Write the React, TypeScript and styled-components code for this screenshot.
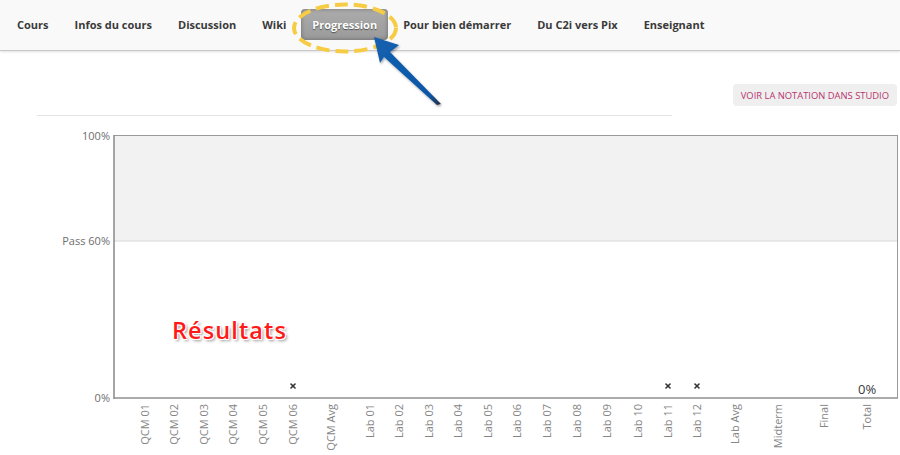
import React from "react";
import styled, { createGlobalStyle } from "styled-components";

const GlobalStyle = createGlobalStyle`
  html, body { margin: 0; padding: 0; background: #ffffff; overflow: hidden; }
  body { font-family: "Open Sans", "Liberation Sans", sans-serif; }
  * { box-sizing: border-box; }
`;

const Page = styled.div`
  position: relative;
  width: 900px;
  height: 455px;
  overflow: hidden;
  background: #fff;
`;

const NavBar = styled.nav`
  height: 51px;
  display: flex;
  align-items: center;
  gap: 4px;
  padding-left: 6px;
  background: #f9f9f9;
  border-bottom: 1px solid #c8c8c8;
  box-shadow: 0 1px 2px rgba(0, 0, 0, 0.12);
`;

const NavLink = styled.a<{ $active?: boolean }>`
  height: 31px;
  display: flex;
  align-items: center;
  padding: 0 11px;
  margin-top: -2px;
  font-size: 11px;
  font-weight: 700;
  color: ${(p) => (p.$active ? "#ffffff" : "#3a3a3a")};
  text-decoration: none;
  border-radius: 4px;
  background: ${(p) => (p.$active ? "linear-gradient(#acacac, #9a9a9a)" : "transparent")};
  box-shadow: ${(p) => (p.$active ? "inset 0 0 4px rgba(0,0,0,0.35)" : "none")};
  text-shadow: ${(p) => (p.$active ? "0 1px 1px rgba(0,0,0,0.5)" : "none")};
`;

const Toolbar = styled.div`
  display: flex;
  justify-content: flex-end;
  padding: 33px 3px 0 0;
`;

const StudioButton = styled.button`
  height: 22px;
  padding: 0 8px;
  border: none;
  border-radius: 4px;
  background: #efefef;
  color: #b8336e;
  font-family: "Open Sans", "Liberation Sans", sans-serif;
  font-size: 9.4px;
  font-weight: 400;
  text-transform: uppercase;
`;

const Divider = styled.div`
  margin: 9px 0 0 37px;
  width: 635px;
  height: 1px;
  background: #e4e4e4;
`;

const ChartSvg = styled.svg`
  display: block;
  width: 900px;
  height: 339px;
  font-family: "Open Sans", "Liberation Sans", sans-serif;
`;

const Overlay = styled.svg`
  position: absolute;
  top: 0;
  left: 0;
  width: 900px;
  height: 455px;
  pointer-events: none;
`;

const Callout = styled.span`
  position: absolute;
  left: 172px;
  top: 314px;
  font-family: "Open Sans", "Liberation Sans", sans-serif;
  font-size: 23.5px;
  font-weight: 600;
  letter-spacing: 1.1px;
  color: #ff1a1a;
  text-shadow: -1px -1px 0 #fff, 1px -1px 0 #fff, -1px 1px 0 #fff, 1px 1px 0 #fff,
    2px 2px 3px rgba(0, 0, 0, 0.45);
`;

const navItems = [
  "Cours",
  "Infos du cours",
  "Discussion",
  "Wiki",
  "Progression",
  "Pour bien démarrer",
  "Du C2i vers Pix",
  "Enseignant",
];

const columns: { label: string; x: number }[] = [
  { label: "QCM 01", x: 145 },
  { label: "QCM 02", x: 174 },
  { label: "QCM 03", x: 204 },
  { label: "QCM 04", x: 233 },
  { label: "QCM 05", x: 263 },
  { label: "QCM 06", x: 293 },
  { label: "QCM Avg", x: 331 },
  { label: "Lab 01", x: 370 },
  { label: "Lab 02", x: 399 },
  { label: "Lab 03", x: 429 },
  { label: "Lab 04", x: 458 },
  { label: "Lab 05", x: 488 },
  { label: "Lab 06", x: 517 },
  { label: "Lab 07", x: 547 },
  { label: "Lab 08", x: 577 },
  { label: "Lab 09", x: 607 },
  { label: "Lab 10", x: 638 },
  { label: "Lab 11", x: 668 },
  { label: "Lab 12", x: 697 },
  { label: "Lab Avg", x: 735 },
  { label: "Midterm", x: 778 },
  { label: "Final", x: 824 },
  { label: "Total", x: 867 },
];

const markers = [293, 668, 697];

const PLOT = { left: 114, right: 897, top: 135, bottom: 398, pass: 241 };

function Chart() {
  return (
    <ChartSvg viewBox="0 116 900 339">
      <rect x={PLOT.left} y={PLOT.top} width={PLOT.right - PLOT.left} height={PLOT.pass - PLOT.top} fill="#f2f2f2" />
      <line x1={PLOT.left} x2={PLOT.right} y1={PLOT.pass} y2={PLOT.pass} stroke="#e3e3e3" strokeWidth={1.5} />
      <line x1={PLOT.left} x2={PLOT.right} y1={PLOT.top + 0.5} y2={PLOT.top + 0.5} stroke="#9a9a9a" strokeWidth={1} />
      <line x1={PLOT.right + 0.5} x2={PLOT.right + 0.5} y1={PLOT.top} y2={PLOT.bottom} stroke="#9a9a9a" strokeWidth={1} />
      <line x1={PLOT.left} x2={PLOT.left} y1={PLOT.top} y2={PLOT.bottom + 1} stroke="#8f8f8f" strokeWidth={1.6} />
      <line x1={PLOT.left} x2={PLOT.right + 1} y1={PLOT.bottom} y2={PLOT.bottom} stroke="#8f8f8f" strokeWidth={1.6} />

      <g fill="#6e6e6e" fontSize={11} textAnchor="end">
        <text x={110} y={140}>100%</text>
        <text x={110} y={245}>Pass 60%</text>
        <text x={110} y={402}>0%</text>
      </g>

      <g fill="#858585" fontSize={11} textAnchor="end">
        {columns.map((c) => (
          <text key={c.label} transform={`translate(${c.x + 4} 404) rotate(-90)`}>
            {c.label}
          </text>
        ))}
      </g>

      <g stroke="#333" strokeWidth={1.6} strokeLinecap="round">
        {markers.map((mx) => (
          <g key={mx}>
            <line x1={mx - 2} y1={384} x2={mx + 2} y2={388} />
            <line x1={mx - 2} y1={388} x2={mx + 2} y2={384} />
          </g>
        ))}
      </g>

      <text x={858} y={394} fontSize={13} fill="#3a3a3a">0%</text>
    </ChartSvg>
  );
}

function Annotations() {
  return (
    <Overlay viewBox="0 0 900 455">
      <defs>
        <filter id="arrowShadow" x="-30%" y="-30%" width="160%" height="160%">
          <feDropShadow dx="1" dy="1.5" stdDeviation="1.2" floodColor="#000" floodOpacity="0.35" />
        </filter>
        <linearGradient id="arrowFill" x1="0" y1="0" x2="1" y2="1">
          <stop offset="0" stopColor="#1460b0" />
          <stop offset="0.85" stopColor="#0b56a6" />
          <stop offset="1" stopColor="#2a2a3a" />
        </linearGradient>
      </defs>
      <ellipse
        cx={345}
        cy={28}
        rx={51}
        ry={23.5}
        fill="none"
        stroke="#f6cc45"
        strokeWidth={4}
        strokeDasharray="13 6"
      />
      <polygon
        points="374,37 399,45 390,52 441,104 437,105 384,57 380,63"
        fill="url(#arrowFill)"
        filter="url(#arrowShadow)"
      />
    </Overlay>
  );
}

export default function App() {
  return (
    <>
      <GlobalStyle />
      <Page>
        <NavBar>
          {navItems.map((item) => (
            <NavLink key={item} href="#" $active={item === "Progression"}>
              {item}
            </NavLink>
          ))}
        </NavBar>
        <Toolbar>
          <StudioButton>Voir la notation dans Studio</StudioButton>
        </Toolbar>
        <Divider />
        <Chart />
        <Annotations />
        <Callout>Résultats</Callout>
      </Page>
    </>
  );
}
